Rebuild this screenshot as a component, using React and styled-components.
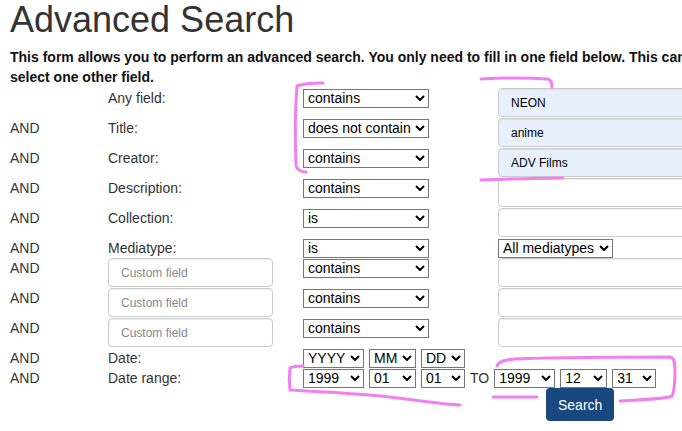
import React from 'react';
import styled, { createGlobalStyle } from 'styled-components';

const GlobalStyle = createGlobalStyle`
  html, body {
    margin: 0;
    padding: 0;
    overflow: hidden;
    background: #fff;
  }
  body {
    font-family: "Liberation Sans", Arial, sans-serif;
    font-size: 14px;
    line-height: 20px;
    color: #333;
  }
`;

const Page = styled.div`
  position: relative;
  width: 900px;
  padding-left: 10px;
`;

const Heading = styled.h1`
  margin: 0 0 7px;
  font-size: 36px;
  font-weight: 400;
  line-height: 40px;
  color: #333;
`;

const Intro = styled.p`
  margin: 0 0 1px;
  font-weight: 700;
  font-size: 14px;
  line-height: 20px;
  color: #111;

  span {
    display: block;
    white-space: nowrap;
  }
`;

const Grid = styled.div`
  display: grid;
  grid-template-columns: 98px 195px 195px 1fr;
  align-items: start;
`;

const Cell = styled.div`
  line-height: 20px;
  grid-column: ${p => p.span || 'auto'};
  display: ${p => (p.inline ? 'flex' : 'block')};
  align-items: flex-start;
  gap: 5px;
`;

const SelectWrap = styled.span`
  position: relative;
  display: inline-block;
  width: ${p => p.width}px;
  height: 19px;
  margin-bottom: 1px;

  svg {
    position: absolute;
    right: 4px;
    top: 7px;
    pointer-events: none;
  }
`;

const NativeSelect = styled.select`
  appearance: none;
  width: 100%;
  height: 19px;
  margin: 0;
  padding: 0 0 0 4px;
  border: 1px solid #767676;
  border-radius: 0;
  background: #fff;
  color: #000;
  font-family: "Liberation Sans", Arial, sans-serif;
  font-size: 14px;
  line-height: 17px;
  outline: none;
`;

const TextInput = styled.input`
  display: block;
  box-sizing: border-box;
  width: ${p => p.width || 260}px;
  height: 29px;
  margin: 0 0 1px;
  padding: 0 12px;
  border: 1px solid #ccc;
  border-radius: 4px;
  box-shadow: inset 0 1px 1px rgba(0, 0, 0, 0.075);
  background: ${p => (p.filled ? '#e8f0fe' : '#fff')};
  color: #000;
  font-family: "Liberation Sans", Arial, sans-serif;
  font-size: 12px;
  outline: none;

  &::placeholder {
    color: #888;
  }
`;

const ToLabel = styled.span`
  line-height: 20px;
  color: #333;
`;

const SearchButton = styled.button`
  margin-left: 48px;
  height: 33px;
  padding: 0 12px;
  border: none;
  border-radius: 4px;
  background: #194880;
  color: #fff;
  font-family: "Liberation Sans", Arial, sans-serif;
  font-size: 14px;
`;

const Scribbles = styled.svg`
  position: absolute;
  left: 0;
  top: 0;
  pointer-events: none;

  path {
    fill: none;
    stroke: #f27ff2;
    stroke-width: 3;
    stroke-linecap: round;
    stroke-linejoin: round;
  }
`;

const Chevron = () => (
  <svg width="10" height="6" viewBox="0 0 10 6">
    <path d="M1 1 L5 5 L9 1" fill="none" stroke="#000" strokeWidth="2" />
  </svg>
);

function Select({ value, width = 126, options }) {
  const list = options || [value];
  return (
    <SelectWrap width={width}>
      <NativeSelect defaultValue={value}>
        {list.map(o => (
          <option key={o}>{o}</option>
        ))}
      </NativeSelect>
      <Chevron />
    </SelectWrap>
  );
}

const ops = ['contains', 'does not contain', 'is'];

const fieldRows = [
  { conj: '', label: 'Any field:', op: 'contains', value: 'NEON' },
  { conj: 'AND', label: 'Title:', op: 'does not contain', value: 'anime' },
  { conj: 'AND', label: 'Creator:', op: 'contains', value: 'ADV Films' },
  { conj: 'AND', label: 'Description:', op: 'contains', value: '' },
  { conj: 'AND', label: 'Collection:', op: 'is', value: '' },
];

export default function App() {
  return (
    <Page>
      <GlobalStyle />
      <Heading>Advanced Search</Heading>
      <Intro>
        <span>
          This form allows you to perform an advanced search. You only need to fill in one field below. This can be
          combined with other fields, or you can
        </span>
        <span>select one other field.</span>
      </Intro>
      <Grid>
        {fieldRows.map(r => (
          <React.Fragment key={r.label}>
            <Cell>{r.conj}</Cell>
            <Cell>{r.label}</Cell>
            <Cell>
              <Select value={r.op} options={ops} />
            </Cell>
            <Cell>
              <TextInput defaultValue={r.value} filled={!!r.value} />
            </Cell>
          </React.Fragment>
        ))}

        <Cell>AND</Cell>
        <Cell>Mediatype:</Cell>
        <Cell>
          <Select value="is" options={ops} />
        </Cell>
        <Cell>
          <Select value="All mediatypes" width={115} />
        </Cell>

        {[1, 2, 3].map(n => (
          <React.Fragment key={n}>
            <Cell>AND</Cell>
            <Cell>
              <TextInput width={165} placeholder="Custom field" />
            </Cell>
            <Cell>
              <Select value="contains" options={ops} />
            </Cell>
            <Cell>
              <TextInput />
            </Cell>
          </React.Fragment>
        ))}

        <Cell>AND</Cell>
        <Cell>Date:</Cell>
        <Cell span="3 / span 2" inline>
          <Select value="YYYY" width={61} />
          <Select value="MM" width={47} />
          <Select value="DD" width={44} />
        </Cell>

        <Cell>AND</Cell>
        <Cell>Date range:</Cell>
        <Cell span="3 / span 2" inline>
          <Select value="1999" width={61} />
          <Select value="01" width={47} />
          <Select value="01" width={44} />
          <ToLabel>TO</ToLabel>
          <Select value="1999" width={61} />
          <Select value="12" width={47} />
          <Select value="31" width={44} />
        </Cell>

        <Cell span="4">
          <SearchButton type="button">Search</SearchButton>
        </Cell>
      </Grid>

      <Scribbles width="682" height="431" viewBox="0 0 682 431">
        <path d="M323 83 C312 83, 302 84, 297 86 C295 110, 295 140, 296 165 C297 170, 300 172, 306 172" />
        <path d="M481 79 C500 78, 530 78, 548 79 C551 80, 552 83, 552 87" />
        <path d="M481 180 C510 179, 540 178, 563 178" />
        <path d="M303 366 C297 366, 292 367, 290 368 C289 375, 289 383, 290 390 C320 392, 350 393, 380 396 C410 399, 440 404, 460 405" />
        <path d="M493 397 L537 397" />
        <path d="M497 366 C499 361, 505 360, 515 359 C560 357, 620 357, 670 357 C674 358, 675 362, 675 370 C675 380, 675 390, 672 396 C665 399, 640 400, 620 401" />
      </Scribbles>
    </Page>
  );
}
